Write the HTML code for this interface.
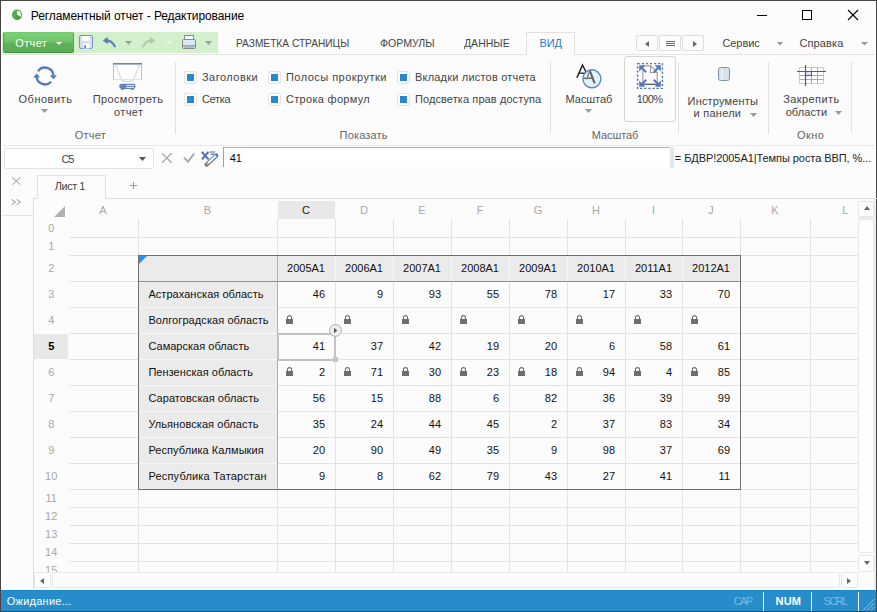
<!DOCTYPE html><html><head><meta charset="utf-8"><style>
html,body{margin:0;padding:0;}
body{width:877px;height:612px;position:relative;overflow:hidden;background:#fcfcfc;font-family:"Liberation Sans", sans-serif;}
.t{position:absolute;white-space:nowrap;}
.b{position:absolute;box-sizing:border-box;}
svg{position:absolute;overflow:visible;}
</style></head><body>
<div class="b" style="left:0px;top:0px;width:877px;height:612px;border:1px solid #474644;"></div><div class="b" style="left:1px;top:1px;width:875px;height:610px;border:1px solid #fff;"></div><svg style="left:11px;top:9px" width="12" height="12" viewBox="0 0 12 12"><circle cx="6" cy="5.7" r="5.1" fill="#55ad50"/><path d="M6 5.9 L6 1.7 A4.1 4.1 0 0 1 9.55 7.95 Z" fill="#fbfdfb"/><path d="M6 5.8 L10.5 8.3 A5.1 5.1 0 0 1 3.8 10.3 Z" fill="#4a9c45"/></svg><div class="t" style="left:30.80px;top:9px;font-size:12px;line-height:14px;color:#000;letter-spacing:-0.085px;">Регламентный отчет - Редактирование</div><div class="b" style="left:757px;top:15px;width:10px;height:1px;background:#000;"></div><div class="b" style="left:802px;top:10px;width:10px;height:10px;border:1px solid #000;"></div><svg style="left:848px;top:10px" width="10" height="10" viewBox="0 0 10 10"><path d="M0 0L10 10M10 0L0 10" stroke="#000" stroke-width="1.1"/></svg><div class="b" style="left:2px;top:32px;width:216px;height:21px;background:#d3f0cd;"></div><div class="b" style="left:2px;top:53px;width:73px;height:1px;background:#dcf2d8;"></div><div class="b" style="left:3px;top:32px;width:71px;height:21px;background:linear-gradient(#80d07b,#6ec369 45%,#5fb25a 55%,#58aa54);border:1px solid #53a74f;border-top-color:#72c96d;border-bottom-color:#428f3e;border-radius:2px;"></div><div class="t" style="left:15.20px;top:37px;font-size:11px;line-height:13px;color:#fff;letter-spacing:0.400px;">Отчет</div><svg style="left:56px;top:42px" width="6" height="3" viewBox="0 0 6 3"><path d="M0 0H6L3.0 3Z" fill="#fff"/></svg><div class="b" style="left:2px;top:54px;width:873px;height:1px;background:#e4e4e4;"></div><div class="t" style="left:235.60px;top:37px;font-size:11px;line-height:13px;color:#444;transform-origin:0 0;transform:scaleX(0.9240);">РАЗМЕТКА СТРАНИЦЫ</div><div class="t" style="left:379.60px;top:37px;font-size:11px;line-height:13px;color:#444;transform-origin:0 0;transform:scaleX(0.9596);">ФОРМУЛЫ</div><div class="t" style="left:463.90px;top:37px;font-size:11px;line-height:13px;color:#444;transform-origin:0 0;transform:scaleX(0.9561);">ДАННЫЕ</div><div class="b" style="left:526px;top:32px;width:49px;height:23px;background:#fcfcfc;border:1px solid #e2e2e2;border-bottom:none;"></div><div class="t" style="left:539.50px;top:37px;font-size:11px;line-height:13px;color:#2e7bc4;letter-spacing:-0.100px;">ВИД</div><div class="b" style="left:636px;top:35px;width:22px;height:16px;border:1px solid #dedede;border-radius:2px;background:#fcfcfc;"></div><div class="b" style="left:659px;top:35px;width:22px;height:16px;border:1px solid #dedede;border-radius:2px;background:#fcfcfc;"></div><div class="b" style="left:682px;top:35px;width:22px;height:16px;border:1px solid #dedede;border-radius:2px;background:#fcfcfc;"></div><svg style="left:644.5px;top:40.5px" width="4" height="6"><path d="M4 0V6L0 3Z" fill="#666"/></svg><svg style="left:666px;top:41px" width="9" height="6"><path d="M0 0.5H9M0 2.5H9M0 4.5H9" stroke="#666" stroke-width="1"/></svg><svg style="left:692.5px;top:40.5px" width="4" height="6"><path d="M0 0V6L4 3Z" fill="#666"/></svg><div class="t" style="left:722.40px;top:37px;font-size:11px;line-height:13px;color:#444;letter-spacing:-0.040px;">Сервис</div><svg style="left:777px;top:42px" width="6" height="3.5" viewBox="0 0 6 3.5"><path d="M0 0H6L3.0 3.5Z" fill="#999"/></svg><div class="t" style="left:799.40px;top:37px;font-size:11px;line-height:13px;color:#444;letter-spacing:0.133px;">Справка</div><svg style="left:861px;top:42px" width="7" height="3.5" viewBox="0 0 7 3.5"><path d="M0 0H7L3.5 3.5Z" fill="#999"/></svg><div class="b" style="left:2px;top:145px;width:873px;height:1px;background:#e9e9e9;"></div><div class="b" style="left:175px;top:62px;width:1px;height:72px;background:#e3e3e3;"></div><div class="b" style="left:550px;top:62px;width:1px;height:72px;background:#e3e3e3;"></div><div class="b" style="left:678px;top:62px;width:1px;height:72px;background:#e3e3e3;"></div><div class="b" style="left:768px;top:62px;width:1px;height:72px;background:#e3e3e3;"></div><div class="b" style="left:851px;top:62px;width:1px;height:72px;background:#e3e3e3;"></div><div class="t" style="left:18.50px;top:93px;font-size:11px;line-height:13px;color:#444;letter-spacing:0.514px;">Обновить</div><svg style="left:41px;top:109px" width="7" height="4" viewBox="0 0 7 4"><path d="M0 0H7L3.5 4Z" fill="#999"/></svg><div class="t" style="left:92.70px;top:93px;font-size:11px;line-height:13px;color:#444;letter-spacing:0.350px;">Просмотреть</div><div class="t" style="left:113.90px;top:106px;font-size:11px;line-height:13px;color:#444;letter-spacing:0.425px;">отчет</div><div class="t" style="left:74.70px;top:129px;font-size:11px;line-height:13px;color:#666;letter-spacing:0.275px;">Отчет</div><div class="b" style="left:184px;top:71px;width:13px;height:13px;border:1px solid #e4e4e4;border-radius:2px;background:#fff;"></div><div class="b" style="left:187px;top:74px;width:7px;height:7px;background:#2988cc;"></div><div class="t" style="left:202.00px;top:71px;font-size:11px;line-height:13px;color:#444;letter-spacing:0.475px;">Заголовки</div><div class="b" style="left:184px;top:93px;width:13px;height:13px;border:1px solid #e4e4e4;border-radius:2px;background:#fff;"></div><div class="b" style="left:187px;top:96px;width:7px;height:7px;background:#2988cc;"></div><div class="t" style="left:202.00px;top:93px;font-size:11px;line-height:13px;color:#444;letter-spacing:-0.325px;">Сетка</div><div class="b" style="left:268px;top:71px;width:13px;height:13px;border:1px solid #e4e4e4;border-radius:2px;background:#fff;"></div><div class="b" style="left:271px;top:74px;width:7px;height:7px;background:#2988cc;"></div><div class="t" style="left:286.00px;top:71px;font-size:11px;line-height:13px;color:#444;letter-spacing:0.467px;">Полосы прокрутки</div><div class="b" style="left:268px;top:93px;width:13px;height:13px;border:1px solid #e4e4e4;border-radius:2px;background:#fff;"></div><div class="b" style="left:271px;top:96px;width:7px;height:7px;background:#2988cc;"></div><div class="t" style="left:286.00px;top:93px;font-size:11px;line-height:13px;color:#444;letter-spacing:0.300px;">Строка формул</div><div class="b" style="left:397px;top:71px;width:13px;height:13px;border:1px solid #e4e4e4;border-radius:2px;background:#fff;"></div><div class="b" style="left:400px;top:74px;width:7px;height:7px;background:#2988cc;"></div><div class="t" style="left:415.00px;top:71px;font-size:11px;line-height:13px;color:#444;letter-spacing:0.200px;">Вкладки листов отчета</div><div class="b" style="left:397px;top:93px;width:13px;height:13px;border:1px solid #e4e4e4;border-radius:2px;background:#fff;"></div><div class="b" style="left:400px;top:96px;width:7px;height:7px;background:#2988cc;"></div><div class="t" style="left:415.00px;top:93px;font-size:11px;line-height:13px;color:#444;letter-spacing:0.090px;">Подсветка прав доступа</div><div class="t" style="left:339.60px;top:129px;font-size:11px;line-height:13px;color:#666;letter-spacing:0.157px;">Показать</div><div class="t" style="left:565.60px;top:93px;font-size:11px;line-height:13px;color:#444;letter-spacing:-0.050px;">Масштаб</div><svg style="left:585px;top:109px" width="7" height="4" viewBox="0 0 7 4"><path d="M0 0H7L3.5 4Z" fill="#999"/></svg><div class="b" style="left:624px;top:56px;width:52px;height:66px;border:1px solid #d6d6d6;border-radius:3px;"></div><div class="t" style="left:636.80px;top:93px;font-size:11px;line-height:13px;color:#444;letter-spacing:-0.667px;">100%</div><div class="t" style="left:591.70px;top:129px;font-size:11px;line-height:13px;color:#666;letter-spacing:-0.067px;">Масштаб</div><div class="t" style="left:687.60px;top:95px;font-size:11px;line-height:13px;color:#444;letter-spacing:0.180px;">Инструменты</div><div class="t" style="left:693.60px;top:107px;font-size:11px;line-height:13px;color:#444;letter-spacing:0.243px;">и панели</div><svg style="left:750px;top:113px" width="7" height="4" viewBox="0 0 7 4"><path d="M0 0H7L3.5 4Z" fill="#999"/></svg><div class="t" style="left:783.20px;top:93px;font-size:11px;line-height:13px;color:#444;letter-spacing:0.425px;">Закрепить</div><div class="t" style="left:785.70px;top:106px;font-size:11px;line-height:13px;color:#444;letter-spacing:0.067px;">области</div><svg style="left:835px;top:111px" width="7" height="4" viewBox="0 0 7 4"><path d="M0 0H7L3.5 4Z" fill="#999"/></svg><div class="t" style="left:796.90px;top:129px;font-size:11px;line-height:13px;color:#666;letter-spacing:0.467px;">Окно</div><div class="b" style="left:4px;top:148px;width:150px;height:21px;border:1px solid #e4e4e4;border-radius:2px;background:#fff;"></div><div class="t" style="left:61.40px;top:153px;font-size:11px;line-height:13px;color:#444;letter-spacing:-1.000px;">C5</div><svg style="left:139px;top:157px" width="7" height="4" viewBox="0 0 7 4"><path d="M0 0H7L3.5 4Z" fill="#555"/></svg><div class="b" style="left:223px;top:147px;width:447px;height:20px;border-left:1px solid #a0a0a0;border-top:1px solid #b4b4b4;background:#fff;"></div><div class="t" style="left:229.80px;top:152px;font-size:11px;line-height:13px;color:#000;letter-spacing:-0.100px;">41</div><div class="b" style="left:670px;top:147px;width:4px;height:21px;background:#e2e6ee;"></div><div class="t" style="left:674.80px;top:152px;font-size:11px;line-height:13px;color:#222;letter-spacing:-0.068px;">= БДВР!2005A1|Темпы роста ВВП, %...</div><svg style="left:11.5px;top:176.5px" width="9" height="8"><path d="M0.3 0.3L8.5 7.8M8.5 0.3L0.3 7.8" stroke="#999" stroke-width="1"/></svg><svg style="left:11px;top:198.5px" width="10" height="7"><path d="M0.5 0.5L4.5 3L0.5 5.5M5.5 0.5L9.5 3L5.5 5.5" fill="none" stroke="#999" stroke-width="1"/></svg><div class="b" style="left:2px;top:215px;width:31px;height:1px;background:#e4e4e4;"></div><div class="b" style="left:33px;top:198px;width:844px;height:1px;background:#e0e0e0;"></div><div class="b" style="left:37px;top:175px;width:69px;height:24px;border:1px solid #e0e0e0;border-bottom:none;background:#fcfcfc;border-radius:2px 2px 0 0;"></div><div class="t" style="left:54.70px;top:180px;font-size:11px;line-height:13px;color:#444;letter-spacing:-0.460px;">Лист 1</div><svg style="left:130px;top:182px" width="7" height="7"><path d="M3.5 0V7M0 3.5H7" stroke="#999" stroke-width="1"/></svg><div class="b" style="left:33px;top:198px;width:1px;height:392px;background:#dcdcdc;"></div><div class="b" style="left:874px;top:199px;width:2px;height:391px;background:#ececec;"></div><div class="b" style="left:278px;top:201px;width:57px;height:18px;background:#e8e8e8;"></div><svg style="left:54px;top:206px" width="11" height="11"><path d="M11 0V11H0Z" fill="#b0b0b0"/></svg><div class="t" style="left:99.30px;top:204px;font-size:11px;line-height:13px;color:#a9a9a9;">A</div><div class="t" style="left:203.85px;top:204px;font-size:11px;line-height:13px;color:#a9a9a9;">B</div><div class="t" style="left:302.05px;top:204px;font-size:11px;line-height:13px;color:#222;">C</div><div class="t" style="left:360.05px;top:204px;font-size:11px;line-height:13px;color:#a9a9a9;">D</div><div class="t" style="left:418.35px;top:204px;font-size:11px;line-height:13px;color:#a9a9a9;">E</div><div class="t" style="left:476.65px;top:204px;font-size:11px;line-height:13px;color:#a9a9a9;">F</div><div class="t" style="left:533.70px;top:204px;font-size:11px;line-height:13px;color:#a9a9a9;">G</div><div class="t" style="left:592.05px;top:204px;font-size:11px;line-height:13px;color:#a9a9a9;">H</div><div class="t" style="left:651.95px;top:204px;font-size:11px;line-height:13px;color:#a9a9a9;">I</div><div class="t" style="left:708.25px;top:204px;font-size:11px;line-height:13px;color:#a9a9a9;">J</div><div class="t" style="left:771.35px;top:204px;font-size:11px;line-height:13px;color:#a9a9a9;">K</div><div class="t" style="left:842.15px;top:204px;font-size:11px;line-height:13px;color:#a9a9a9;">L</div><div class="b" style="left:138px;top:219px;width:1px;height:353px;background:#e3e3e3;"></div><div class="b" style="left:277px;top:219px;width:1px;height:353px;background:#e3e3e3;"></div><div class="b" style="left:335px;top:219px;width:1px;height:353px;background:#e3e3e3;"></div><div class="b" style="left:393px;top:219px;width:1px;height:353px;background:#e3e3e3;"></div><div class="b" style="left:451px;top:219px;width:1px;height:353px;background:#e3e3e3;"></div><div class="b" style="left:509px;top:219px;width:1px;height:353px;background:#e3e3e3;"></div><div class="b" style="left:567px;top:219px;width:1px;height:353px;background:#e3e3e3;"></div><div class="b" style="left:625px;top:219px;width:1px;height:353px;background:#e3e3e3;"></div><div class="b" style="left:682px;top:219px;width:1px;height:353px;background:#e3e3e3;"></div><div class="b" style="left:740px;top:219px;width:1px;height:353px;background:#e3e3e3;"></div><div class="b" style="left:810px;top:219px;width:1px;height:353px;background:#e3e3e3;"></div><div class="b" style="left:69px;top:237px;width:789px;height:1px;background:#e3e3e3;"></div><div class="b" style="left:69px;top:255px;width:789px;height:1px;background:#e3e3e3;"></div><div class="b" style="left:69px;top:281px;width:789px;height:1px;background:#e3e3e3;"></div><div class="b" style="left:69px;top:307px;width:789px;height:1px;background:#e3e3e3;"></div><div class="b" style="left:69px;top:333px;width:789px;height:1px;background:#e3e3e3;"></div><div class="b" style="left:69px;top:359px;width:789px;height:1px;background:#e3e3e3;"></div><div class="b" style="left:69px;top:385px;width:789px;height:1px;background:#e3e3e3;"></div><div class="b" style="left:69px;top:411px;width:789px;height:1px;background:#e3e3e3;"></div><div class="b" style="left:69px;top:437px;width:789px;height:1px;background:#e3e3e3;"></div><div class="b" style="left:69px;top:463px;width:789px;height:1px;background:#e3e3e3;"></div><div class="b" style="left:69px;top:489px;width:789px;height:1px;background:#e3e3e3;"></div><div class="b" style="left:69px;top:507px;width:789px;height:1px;background:#e3e3e3;"></div><div class="b" style="left:69px;top:525px;width:789px;height:1px;background:#e3e3e3;"></div><div class="b" style="left:69px;top:543px;width:789px;height:1px;background:#e3e3e3;"></div><div class="b" style="left:69px;top:561px;width:789px;height:1px;background:#e3e3e3;"></div><div class="t" style="left:48.15px;top:222px;font-size:11px;line-height:13px;color:#a9a9a9;">0</div><div class="t" style="left:48.15px;top:240px;font-size:11px;line-height:13px;color:#a9a9a9;">1</div><div class="t" style="left:48.15px;top:262px;font-size:11px;line-height:13px;color:#a9a9a9;">2</div><div class="t" style="left:48.15px;top:288px;font-size:11px;line-height:13px;color:#a9a9a9;">3</div><div class="t" style="left:48.15px;top:314px;font-size:11px;line-height:13px;color:#a9a9a9;">4</div><div class="b" style="left:34px;top:334px;width:34px;height:25px;background:#e8e8e8;"></div><div class="t" style="left:48.15px;top:340px;font-size:11px;line-height:13px;color:#000;font-weight:bold;">5</div><div class="t" style="left:48.15px;top:366px;font-size:11px;line-height:13px;color:#a9a9a9;">6</div><div class="t" style="left:48.15px;top:392px;font-size:11px;line-height:13px;color:#a9a9a9;">7</div><div class="t" style="left:48.15px;top:418px;font-size:11px;line-height:13px;color:#a9a9a9;">8</div><div class="t" style="left:48.15px;top:444px;font-size:11px;line-height:13px;color:#a9a9a9;">9</div><div class="t" style="left:45.10px;top:470px;font-size:11px;line-height:13px;color:#a9a9a9;">10</div><div class="t" style="left:45.50px;top:492px;font-size:11px;line-height:13px;color:#a9a9a9;">11</div><div class="t" style="left:45.10px;top:510px;font-size:11px;line-height:13px;color:#a9a9a9;">12</div><div class="t" style="left:45.10px;top:528px;font-size:11px;line-height:13px;color:#a9a9a9;">13</div><div class="t" style="left:45.10px;top:546px;font-size:11px;line-height:13px;color:#a9a9a9;">14</div><div class="t" style="left:45.10px;top:564px;font-size:11px;line-height:13px;color:#a9a9a9;">15</div><div class="b" style="left:139px;top:256px;width:138px;height:233px;background:#ebebeb;"></div><div class="b" style="left:277px;top:256px;width:463px;height:25px;background:#ebebeb;"></div><div class="b" style="left:139px;top:307px;width:138px;height:1px;background:#f7f7f7;"></div><div class="b" style="left:139px;top:333px;width:138px;height:1px;background:#f7f7f7;"></div><div class="b" style="left:139px;top:359px;width:138px;height:1px;background:#f7f7f7;"></div><div class="b" style="left:139px;top:385px;width:138px;height:1px;background:#f7f7f7;"></div><div class="b" style="left:139px;top:411px;width:138px;height:1px;background:#f7f7f7;"></div><div class="b" style="left:139px;top:437px;width:138px;height:1px;background:#f7f7f7;"></div><div class="b" style="left:139px;top:463px;width:138px;height:1px;background:#f7f7f7;"></div><div class="b" style="left:139px;top:281px;width:601px;height:1px;background:#8e8e8e;"></div><div class="b" style="left:277px;top:256px;width:1px;height:233px;background:#adadad;"></div><div class="b" style="left:335px;top:256px;width:1px;height:25px;background:#f9f9f9;"></div><div class="b" style="left:393px;top:256px;width:1px;height:25px;background:#f9f9f9;"></div><div class="b" style="left:451px;top:256px;width:1px;height:25px;background:#f9f9f9;"></div><div class="b" style="left:509px;top:256px;width:1px;height:25px;background:#f9f9f9;"></div><div class="b" style="left:567px;top:256px;width:1px;height:25px;background:#f9f9f9;"></div><div class="b" style="left:625px;top:256px;width:1px;height:25px;background:#f9f9f9;"></div><div class="b" style="left:682px;top:256px;width:1px;height:25px;background:#f9f9f9;"></div><div class="b" style="left:138px;top:255px;width:603px;height:235px;border:1px solid #6e6e6e;"></div><svg style="left:139px;top:256px" width="8" height="8"><path d="M0 0H8L0 8Z" fill="#2f8ff0"/></svg><div class="t" style="left:287.05px;top:262px;font-size:11px;line-height:13px;color:#111;">2005A1</div><div class="t" style="left:345.05px;top:262px;font-size:11px;line-height:13px;color:#111;">2006A1</div><div class="t" style="left:403.05px;top:262px;font-size:11px;line-height:13px;color:#111;">2007A1</div><div class="t" style="left:461.05px;top:262px;font-size:11px;line-height:13px;color:#111;">2008A1</div><div class="t" style="left:519.05px;top:262px;font-size:11px;line-height:13px;color:#111;">2009A1</div><div class="t" style="left:577.05px;top:262px;font-size:11px;line-height:13px;color:#111;">2010A1</div><div class="t" style="left:634.95px;top:262px;font-size:11px;line-height:13px;color:#111;">2011A1</div><div class="t" style="left:692.05px;top:262px;font-size:11px;line-height:13px;color:#111;">2012A1</div><div class="t" style="left:148.40px;top:288px;font-size:11px;line-height:13px;color:#111;letter-spacing:0.053px;">Астраханская область</div><div class="t" style="left:312.80px;top:288px;font-size:11px;line-height:13px;color:#111;">46</div><div class="t" style="left:376.90px;top:288px;font-size:11px;line-height:13px;color:#111;">9</div><div class="t" style="left:428.80px;top:288px;font-size:11px;line-height:13px;color:#111;">93</div><div class="t" style="left:486.80px;top:288px;font-size:11px;line-height:13px;color:#111;">55</div><div class="t" style="left:544.80px;top:288px;font-size:11px;line-height:13px;color:#111;">78</div><div class="t" style="left:602.80px;top:288px;font-size:11px;line-height:13px;color:#111;">17</div><div class="t" style="left:659.80px;top:288px;font-size:11px;line-height:13px;color:#111;">33</div><div class="t" style="left:717.80px;top:288px;font-size:11px;line-height:13px;color:#111;">70</div><div class="t" style="left:148.40px;top:314px;font-size:11px;line-height:13px;color:#111;letter-spacing:0.080px;">Волгоградская область</div><svg style="left:286px;top:315px" width="7" height="9" viewBox="0 0 7 9"><path d="M1.5 4.2V2.6A2 2 0 0 1 5.5 2.6V4.2" fill="none" stroke="#6e6e6e" stroke-width="1.1"/><rect x="0" y="4" width="7" height="5" fill="#6e6e6e"/></svg><svg style="left:344px;top:315px" width="7" height="9" viewBox="0 0 7 9"><path d="M1.5 4.2V2.6A2 2 0 0 1 5.5 2.6V4.2" fill="none" stroke="#6e6e6e" stroke-width="1.1"/><rect x="0" y="4" width="7" height="5" fill="#6e6e6e"/></svg><svg style="left:402px;top:315px" width="7" height="9" viewBox="0 0 7 9"><path d="M1.5 4.2V2.6A2 2 0 0 1 5.5 2.6V4.2" fill="none" stroke="#6e6e6e" stroke-width="1.1"/><rect x="0" y="4" width="7" height="5" fill="#6e6e6e"/></svg><svg style="left:460px;top:315px" width="7" height="9" viewBox="0 0 7 9"><path d="M1.5 4.2V2.6A2 2 0 0 1 5.5 2.6V4.2" fill="none" stroke="#6e6e6e" stroke-width="1.1"/><rect x="0" y="4" width="7" height="5" fill="#6e6e6e"/></svg><svg style="left:518px;top:315px" width="7" height="9" viewBox="0 0 7 9"><path d="M1.5 4.2V2.6A2 2 0 0 1 5.5 2.6V4.2" fill="none" stroke="#6e6e6e" stroke-width="1.1"/><rect x="0" y="4" width="7" height="5" fill="#6e6e6e"/></svg><svg style="left:576px;top:315px" width="7" height="9" viewBox="0 0 7 9"><path d="M1.5 4.2V2.6A2 2 0 0 1 5.5 2.6V4.2" fill="none" stroke="#6e6e6e" stroke-width="1.1"/><rect x="0" y="4" width="7" height="5" fill="#6e6e6e"/></svg><svg style="left:634px;top:315px" width="7" height="9" viewBox="0 0 7 9"><path d="M1.5 4.2V2.6A2 2 0 0 1 5.5 2.6V4.2" fill="none" stroke="#6e6e6e" stroke-width="1.1"/><rect x="0" y="4" width="7" height="5" fill="#6e6e6e"/></svg><svg style="left:691px;top:315px" width="7" height="9" viewBox="0 0 7 9"><path d="M1.5 4.2V2.6A2 2 0 0 1 5.5 2.6V4.2" fill="none" stroke="#6e6e6e" stroke-width="1.1"/><rect x="0" y="4" width="7" height="5" fill="#6e6e6e"/></svg><div class="t" style="left:148.40px;top:340px;font-size:11px;line-height:13px;color:#111;letter-spacing:0.025px;">Самарская область</div><div class="t" style="left:312.80px;top:340px;font-size:11px;line-height:13px;color:#111;">41</div><div class="t" style="left:370.80px;top:340px;font-size:11px;line-height:13px;color:#111;">37</div><div class="t" style="left:428.80px;top:340px;font-size:11px;line-height:13px;color:#111;">42</div><div class="t" style="left:486.80px;top:340px;font-size:11px;line-height:13px;color:#111;">19</div><div class="t" style="left:544.80px;top:340px;font-size:11px;line-height:13px;color:#111;">20</div><div class="t" style="left:608.90px;top:340px;font-size:11px;line-height:13px;color:#111;">6</div><div class="t" style="left:659.80px;top:340px;font-size:11px;line-height:13px;color:#111;">58</div><div class="t" style="left:717.80px;top:340px;font-size:11px;line-height:13px;color:#111;">61</div><div class="t" style="left:148.40px;top:366px;font-size:11px;line-height:13px;color:#111;letter-spacing:0.053px;">Пензенская область</div><svg style="left:286px;top:367px" width="7" height="9" viewBox="0 0 7 9"><path d="M1.5 4.2V2.6A2 2 0 0 1 5.5 2.6V4.2" fill="none" stroke="#6e6e6e" stroke-width="1.1"/><rect x="0" y="4" width="7" height="5" fill="#6e6e6e"/></svg><div class="t" style="left:318.90px;top:366px;font-size:11px;line-height:13px;color:#111;">2</div><svg style="left:344px;top:367px" width="7" height="9" viewBox="0 0 7 9"><path d="M1.5 4.2V2.6A2 2 0 0 1 5.5 2.6V4.2" fill="none" stroke="#6e6e6e" stroke-width="1.1"/><rect x="0" y="4" width="7" height="5" fill="#6e6e6e"/></svg><div class="t" style="left:370.80px;top:366px;font-size:11px;line-height:13px;color:#111;">71</div><svg style="left:402px;top:367px" width="7" height="9" viewBox="0 0 7 9"><path d="M1.5 4.2V2.6A2 2 0 0 1 5.5 2.6V4.2" fill="none" stroke="#6e6e6e" stroke-width="1.1"/><rect x="0" y="4" width="7" height="5" fill="#6e6e6e"/></svg><div class="t" style="left:428.80px;top:366px;font-size:11px;line-height:13px;color:#111;">30</div><svg style="left:460px;top:367px" width="7" height="9" viewBox="0 0 7 9"><path d="M1.5 4.2V2.6A2 2 0 0 1 5.5 2.6V4.2" fill="none" stroke="#6e6e6e" stroke-width="1.1"/><rect x="0" y="4" width="7" height="5" fill="#6e6e6e"/></svg><div class="t" style="left:486.80px;top:366px;font-size:11px;line-height:13px;color:#111;">23</div><svg style="left:518px;top:367px" width="7" height="9" viewBox="0 0 7 9"><path d="M1.5 4.2V2.6A2 2 0 0 1 5.5 2.6V4.2" fill="none" stroke="#6e6e6e" stroke-width="1.1"/><rect x="0" y="4" width="7" height="5" fill="#6e6e6e"/></svg><div class="t" style="left:544.80px;top:366px;font-size:11px;line-height:13px;color:#111;">18</div><svg style="left:576px;top:367px" width="7" height="9" viewBox="0 0 7 9"><path d="M1.5 4.2V2.6A2 2 0 0 1 5.5 2.6V4.2" fill="none" stroke="#6e6e6e" stroke-width="1.1"/><rect x="0" y="4" width="7" height="5" fill="#6e6e6e"/></svg><div class="t" style="left:602.80px;top:366px;font-size:11px;line-height:13px;color:#111;">94</div><svg style="left:634px;top:367px" width="7" height="9" viewBox="0 0 7 9"><path d="M1.5 4.2V2.6A2 2 0 0 1 5.5 2.6V4.2" fill="none" stroke="#6e6e6e" stroke-width="1.1"/><rect x="0" y="4" width="7" height="5" fill="#6e6e6e"/></svg><div class="t" style="left:665.90px;top:366px;font-size:11px;line-height:13px;color:#111;">4</div><svg style="left:691px;top:367px" width="7" height="9" viewBox="0 0 7 9"><path d="M1.5 4.2V2.6A2 2 0 0 1 5.5 2.6V4.2" fill="none" stroke="#6e6e6e" stroke-width="1.1"/><rect x="0" y="4" width="7" height="5" fill="#6e6e6e"/></svg><div class="t" style="left:717.80px;top:366px;font-size:11px;line-height:13px;color:#111;">85</div><div class="t" style="left:148.40px;top:392px;font-size:11px;line-height:13px;color:#111;letter-spacing:0.072px;">Саратовская область</div><div class="t" style="left:312.80px;top:392px;font-size:11px;line-height:13px;color:#111;">56</div><div class="t" style="left:370.80px;top:392px;font-size:11px;line-height:13px;color:#111;">15</div><div class="t" style="left:428.80px;top:392px;font-size:11px;line-height:13px;color:#111;">88</div><div class="t" style="left:492.90px;top:392px;font-size:11px;line-height:13px;color:#111;">6</div><div class="t" style="left:544.80px;top:392px;font-size:11px;line-height:13px;color:#111;">82</div><div class="t" style="left:602.80px;top:392px;font-size:11px;line-height:13px;color:#111;">36</div><div class="t" style="left:659.80px;top:392px;font-size:11px;line-height:13px;color:#111;">39</div><div class="t" style="left:717.80px;top:392px;font-size:11px;line-height:13px;color:#111;">99</div><div class="t" style="left:148.40px;top:418px;font-size:11px;line-height:13px;color:#111;letter-spacing:0.078px;">Ульяновская область</div><div class="t" style="left:312.80px;top:418px;font-size:11px;line-height:13px;color:#111;">35</div><div class="t" style="left:370.80px;top:418px;font-size:11px;line-height:13px;color:#111;">24</div><div class="t" style="left:428.80px;top:418px;font-size:11px;line-height:13px;color:#111;">44</div><div class="t" style="left:486.80px;top:418px;font-size:11px;line-height:13px;color:#111;">45</div><div class="t" style="left:550.90px;top:418px;font-size:11px;line-height:13px;color:#111;">2</div><div class="t" style="left:602.80px;top:418px;font-size:11px;line-height:13px;color:#111;">37</div><div class="t" style="left:659.80px;top:418px;font-size:11px;line-height:13px;color:#111;">83</div><div class="t" style="left:717.80px;top:418px;font-size:11px;line-height:13px;color:#111;">34</div><div class="t" style="left:148.40px;top:444px;font-size:11px;line-height:13px;color:#111;letter-spacing:0.072px;">Республика Калмыкия</div><div class="t" style="left:312.80px;top:444px;font-size:11px;line-height:13px;color:#111;">20</div><div class="t" style="left:370.80px;top:444px;font-size:11px;line-height:13px;color:#111;">90</div><div class="t" style="left:428.80px;top:444px;font-size:11px;line-height:13px;color:#111;">49</div><div class="t" style="left:486.80px;top:444px;font-size:11px;line-height:13px;color:#111;">35</div><div class="t" style="left:550.90px;top:444px;font-size:11px;line-height:13px;color:#111;">9</div><div class="t" style="left:602.80px;top:444px;font-size:11px;line-height:13px;color:#111;">98</div><div class="t" style="left:659.80px;top:444px;font-size:11px;line-height:13px;color:#111;">37</div><div class="t" style="left:717.80px;top:444px;font-size:11px;line-height:13px;color:#111;">69</div><div class="t" style="left:148.40px;top:470px;font-size:11px;line-height:13px;color:#111;letter-spacing:0.195px;">Республика Татарстан</div><div class="t" style="left:318.90px;top:470px;font-size:11px;line-height:13px;color:#111;">9</div><div class="t" style="left:376.90px;top:470px;font-size:11px;line-height:13px;color:#111;">8</div><div class="t" style="left:428.80px;top:470px;font-size:11px;line-height:13px;color:#111;">62</div><div class="t" style="left:486.80px;top:470px;font-size:11px;line-height:13px;color:#111;">79</div><div class="t" style="left:544.80px;top:470px;font-size:11px;line-height:13px;color:#111;">43</div><div class="t" style="left:602.80px;top:470px;font-size:11px;line-height:13px;color:#111;">27</div><div class="t" style="left:659.80px;top:470px;font-size:11px;line-height:13px;color:#111;">41</div><div class="t" style="left:718.60px;top:470px;font-size:11px;line-height:13px;color:#111;">11</div><div class="b" style="left:277px;top:333px;width:59px;height:28px;border:2px solid #c2c2c2;"></div><div class="b" style="left:333px;top:357px;width:5px;height:5px;background:#c6c6c6;"></div><svg style="left:329px;top:324px" width="13" height="13" viewBox="0 0 13 13"><circle cx="6.5" cy="6.5" r="5.9" fill="#efefef" stroke="#a8acb4" stroke-width="1"/><path d="M5 3.8V9.2L8.4 6.5Z" fill="#555"/></svg><div class="b" style="left:858px;top:199px;width:16px;height:391px;background:#fcfcfc;"></div><div class="b" style="left:858px;top:201px;width:16px;height:16px;border:1px solid #e6e6e6;border-radius:2px;background:#fdfdfd;"></div><svg style="left:864px;top:206px" width="6" height="4"><path d="M0 4H6L3 0Z" fill="#666"/></svg><div class="b" style="left:858px;top:217px;width:16px;height:2px;background:#ececec;"></div><div class="b" style="left:858px;top:219px;width:16px;height:334px;border:1px solid #e9e9e9;border-radius:2px;background:#fdfdfd;"></div><div class="b" style="left:858px;top:555px;width:16px;height:17px;border:1px solid #e6e6e6;border-radius:2px;background:#fdfdfd;"></div><svg style="left:864px;top:561px" width="6" height="4"><path d="M0 0H6L3 4Z" fill="#666"/></svg><div class="b" style="left:34px;top:572px;width:824px;height:18px;background:#fcfcfc;"></div><div class="b" style="left:34px;top:572px;width:17px;height:16px;border:1px solid #e6e6e6;border-radius:2px;background:#fdfdfd;"></div><svg style="left:40px;top:578px" width="4" height="6"><path d="M4 0V6L0 3Z" fill="#666"/></svg><div class="b" style="left:52px;top:572px;width:788px;height:16px;border:1px solid #e9e9e9;border-radius:2px;background:#fdfdfd;"></div><div class="b" style="left:841px;top:572px;width:17px;height:16px;border:1px solid #e6e6e6;border-radius:2px;background:#fdfdfd;"></div><svg style="left:847px;top:578px" width="4" height="6"><path d="M0 0V6L4 3Z" fill="#666"/></svg><div class="b" style="left:1px;top:590px;width:875px;height:21px;background:#278dca;border-top:1px solid #1c86c8;"></div><div class="t" style="left:6.80px;top:595px;font-size:11px;line-height:13px;color:#fff;letter-spacing:0.240px;">Ожидание...</div><div class="b" style="left:763px;top:592px;width:1px;height:19px;background:#fff;"></div><div class="b" style="left:811px;top:592px;width:1px;height:19px;background:#fff;"></div><div class="b" style="left:858px;top:592px;width:1px;height:19px;background:#fff;"></div><div class="t" style="left:733.70px;top:595px;font-size:11px;line-height:13px;color:#80b8e0;letter-spacing:-1.650px;">CAP</div><div class="t" style="left:775.60px;top:595px;font-size:11px;line-height:13px;color:#fff;letter-spacing:0.100px;font-weight:bold;">NUM</div><div class="t" style="left:823.40px;top:595px;font-size:11px;line-height:13px;color:#80b8e0;letter-spacing:-1.567px;">SCRL</div><svg style="left:862px;top:598px" width="13" height="13"><path d="M12.5 1L1 12.5M12.5 5L5 12.5M12.5 9L9 12.5" stroke="#8cc0e4" stroke-width="1"/></svg>
<svg style="left:0;top:0;pointer-events:none" width="877" height="612" viewBox="0 0 877 612">
<!-- save -->
<g>
<rect x="79.5" y="35.5" width="13" height="13" rx="1.5" fill="#d3ddf0" stroke="#7d95c6" stroke-width="1"/>
<rect x="82" y="36" width="8" height="4.8" fill="#fff"/>
<rect x="83" y="43.5" width="6.5" height="5" fill="#fff"/>
<rect x="84.2" y="45" width="1.8" height="3.5" fill="#6d86bb"/>
</g>
<!-- undo -->
<path d="M106.5 40.3 Q112 40.5 114.8 46.3" fill="none" stroke="#5a7fbb" stroke-width="2.2" stroke-linecap="round"/>
<path d="M102.8 40.6 L107.8 36.8 L107.8 44.3 Z" fill="#5a7fbb"/>
<path d="M125 41H132L128.5 44.8Z" fill="#9a9a9a"/>
<!-- redo (disabled) -->
<path d="M151.5 40.3 Q146 40.5 143.2 46.3" fill="none" stroke="#b4c9b2" stroke-width="2.2" stroke-linecap="round"/>
<path d="M155.2 40.6 L150.2 36.8 L150.2 44.3 Z" fill="#b4c9b2"/>
<path d="M165.5 41H172.5L169 44.8Z" fill="#e9f3e8"/>
<!-- printer -->
<rect x="184.5" y="35.5" width="9" height="5" fill="#fff" stroke="#8a8a8a" stroke-width="1"/>
<rect x="182.5" y="39.5" width="13" height="9" rx="1" fill="#dbe6f4" stroke="#888" stroke-width="1"/>
<rect x="183" y="45.5" width="12" height="1" fill="#5b6f96"/>
<rect x="184" y="46.5" width="10" height="1.5" fill="#bbb"/>
<path d="M205 41H212L208.5 45Z" fill="#9c9c9c"/>
<!-- refresh -->
<path d="M38.04 71.30 A8.4 8.4 0 0 1 53.38 75.41" fill="none" stroke="#5479b6" stroke-width="2.3"/>
<path d="M49.9 75.2 L56.9 75.2 L53.4 79.3 Z" fill="#5479b6"/>
<path d="M51.14 81.73 A8.4 8.4 0 0 1 36.62 76.59" fill="none" stroke="#5479b6" stroke-width="2.3"/>
<path d="M33.1 77.4 L40.1 77.4 L36.6 73.5 Z" fill="#5479b6"/>
<!-- projector -->
<rect x="113.5" y="63.5" width="28" height="16" fill="#fff" stroke="#b3c2df" stroke-width="1"/>
<rect x="113" y="63" width="29" height="1.6" fill="#6487c0"/>
<path d="M115.5 65 L122 80.5 M139.5 65 L133 80.5" stroke="#c3cfe8" stroke-width="0.9" fill="none"/>
<path d="M113.5 79.5 H141.5" stroke="#e2e2e2" stroke-width="1"/>
<path d="M122 80.5 Q128 83.5 133 80.5" stroke="#c3cfe8" stroke-width="0.9" fill="none"/>
<rect x="119.2" y="83.8" width="16.4" height="5.2" rx="2.4" fill="#6283b9"/>
<rect x="126" y="85" width="8" height="1" fill="#dfe6f2"/>
<rect x="126" y="87" width="8" height="1" fill="#dfe6f2"/>
<rect x="121" y="88.5" width="3" height="1.3" fill="#6283b9"/>
<rect x="131" y="88.5" width="3" height="1.3" fill="#6283b9"/>
<!-- zoom icon -->
<path d="M576.9 77.8 L582.5 65 L587.5 75" fill="none" stroke="#1e1e1e" stroke-width="1.5"/>
<path d="M579.2 73.2 H585.5" stroke="#1e1e1e" stroke-width="1.3"/>
<circle cx="591.9" cy="78.8" r="9" fill="#e1f4fb" stroke="#5887c4" stroke-width="1.4"/>
<path d="M583.8 78.3 H586.6 M588 78.3 H592.3" stroke="#6a6a6a" stroke-width="1.6"/>
<path d="M589.8 70.6 L594.7 83.3" stroke="#656565" stroke-width="2.1"/>
<path d="M589.8 70.6 L586.6 79.5" stroke="#7a7a7a" stroke-width="1.4"/>
<!-- 100% icon -->
<rect x="637.6" y="63.6" width="24.8" height="24.8" fill="none" stroke="#4a74b4" stroke-width="1.4" stroke-dasharray="2.2 1.9"/>
<path d="M642.9 65.9 H650.6 L657.2 72.5 V84.2 H642.9 Z" fill="#fff" stroke="#9a9a9a" stroke-width="1.1"/>
<path d="M650.6 65.9 V72.5 H657.2" fill="none" stroke="#9a9a9a" stroke-width="1.1"/>
<path d="M642.6 84.4 H657.4" stroke="#6a6a6a" stroke-width="1.4"/>
<g fill="#5479b6" stroke="#5479b6">
<path d="M639.2 65.2 L645.4 65.2 L639.2 71.4 Z" stroke="none"/><path d="M641.5 67.5 L646.2 72.2" stroke-width="2"/>
<path d="M660.8 65.2 L654.6 65.2 L660.8 71.4 Z" stroke="none"/><path d="M658.5 67.5 L653.8 72.2" stroke-width="2"/>
<path d="M639.2 86.8 L645.4 86.8 L639.2 80.6 Z" stroke="none"/><path d="M641.5 84.5 L646.2 79.8" stroke-width="2"/>
<path d="M660.8 86.8 L654.6 86.8 L660.8 80.6 Z" stroke="none"/><path d="M658.5 84.5 L653.8 79.8" stroke-width="2"/>
</g>
<!-- tools icon -->
<rect x="718.5" y="67.5" width="11" height="13" rx="2" fill="#d9e1ec" stroke="#8092ab" stroke-width="1"/>
<rect x="721" y="69" width="2" height="10" fill="#eaf6f6"/>
<!-- freeze icon -->
<rect x="799.5" y="67.5" width="24" height="16" fill="#fff" stroke="#c5ccd6" stroke-width="1"/>
<path d="M811.5 67.5 V83.5 M817.5 67.5 V83.5 M799.5 75.5 H823.5 M799.5 79.5 H823.5" stroke="#a9a9a9" stroke-width="1"/>
<rect x="805.5" y="71.5" width="6" height="4" fill="#d8e3f3" stroke="#4b5e8e" stroke-width="1"/>
<path d="M805.5 65 V86 M797 71.5 H826" stroke="#5158a0" stroke-width="1.2"/>
<!-- formula bar icons -->
<path d="M162 153.3 L171.7 162.8 M171.7 153.3 L162 162.8" stroke="#acacac" stroke-width="1.4"/>
<path d="M184 157.5 L188 161.6 L194.2 153.5" fill="none" stroke="#acacac" stroke-width="2"/>
<path d="M201.8 151.9 L208.6 159.4 M208.4 151.9 L202 159.4" stroke="#4b70b2" stroke-width="2"/>
<path d="M209.8 152 H215.2 M210.6 154.2 H214.4" stroke="#4b70b2" stroke-width="1.2"/>
<path d="M206.6 164.6 L216.3 155.6" stroke="#5a7cba" stroke-width="4.2" stroke-linecap="round"/>
<path d="M207.6 163.5 L215.9 155.8" stroke="#fbfbfb" stroke-width="2.2"/>
<path d="M205.6 165.8 L207.2 161.4 L210 164.2 Z" fill="#f2a233"/>
<path d="M205.2 166.2 L206 164.2 L207.2 165.4 Z" fill="#555"/>
</svg>
</body></html>
